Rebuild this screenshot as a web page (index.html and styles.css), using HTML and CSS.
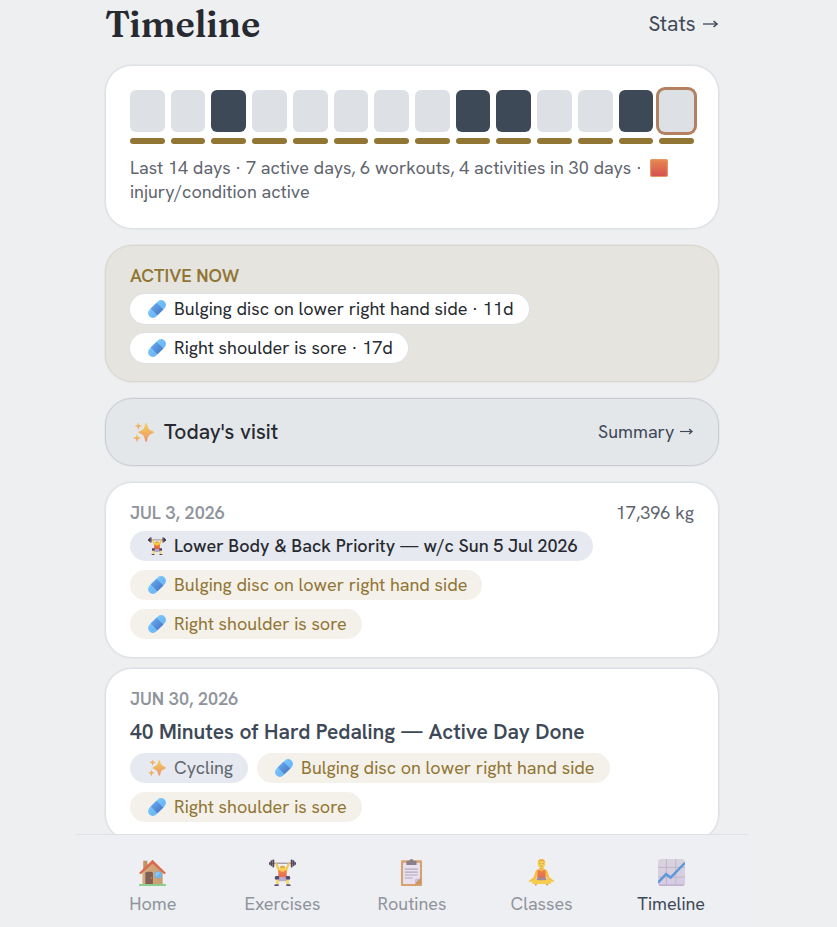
FILE: index.html
```html
<!DOCTYPE html>
<html lang="en">
<head>
<meta charset="utf-8">
<meta name="viewport" content="width=device-width, initial-scale=1">
<title>Timeline</title>
<link rel="stylesheet" href="styles.css">
</head>
<body>
<svg class="sprite" aria-hidden="true">
  <defs>
    <linearGradient id="g-blue" x1="0" y1="0" x2="0" y2="1"><stop offset="0" stop-color="#7cc8fb"/><stop offset="1" stop-color="#6db4f5"/></linearGradient>
    <linearGradient id="g-pad" x1="0" y1="0" x2="0" y2="1"><stop offset="0" stop-color="#5fa3ea"/><stop offset="1" stop-color="#4f7fcb"/></linearGradient>
    <linearGradient id="g-spark" x1="0" y1="0" x2="0" y2="1"><stop offset="0" stop-color="#f3cf57"/><stop offset="1" stop-color="#ee9370"/></linearGradient>
    <linearGradient id="g-red" x1="0" y1="0" x2="0" y2="1"><stop offset="0" stop-color="#e58650"/><stop offset="1" stop-color="#d65350"/></linearGradient>
    <linearGradient id="g-wall" x1="0" y1="0" x2="1" y2="0"><stop offset="0" stop-color="#d3a877"/><stop offset="1" stop-color="#c39462"/></linearGradient>
    <linearGradient id="g-chart" x1="0" y1="0" x2="0" y2="1"><stop offset="0" stop-color="#d6d0dc"/><stop offset="0.9" stop-color="#d5c8e2"/><stop offset="1" stop-color="#b6a3c6"/></linearGradient>
    <linearGradient id="g-shirt" x1="0" y1="0" x2="0" y2="1"><stop offset="0" stop-color="#f27a35"/><stop offset="1" stop-color="#dd5f45"/></linearGradient>
  </defs>
  <symbol id="bandage" viewBox="0 0 32 32">
    <g transform="rotate(-45 16 16)">
      <rect x="-3" y="7.500" width="38" height="17" rx="8.500" fill="url(#g-blue)"/>
      <rect x="8.500" y="7.500" width="15" height="17" fill="url(#g-pad)"/>
      <g fill="#5aa3e8"><circle cx="1" cy="13" r=".8"/><circle cx="5" cy="13" r=".8"/><circle cx="1" cy="18" r=".8"/><circle cx="5" cy="18" r=".8"/><circle cx="27" cy="13" r=".8"/><circle cx="31" cy="13" r=".8"/><circle cx="27" cy="18" r=".8"/><circle cx="31" cy="18" r=".8"/></g>
    </g>
  </symbol>
  <symbol id="sparkles" viewBox="0 0 32 32">
    <g fill="url(#g-spark)">
      <path d="M20 2c1 0 1.300.8 1.600 2 1.400 6 2.800 8 8.800 10 2 .7 2 2.500 0 3.200-6 2-7.400 4-8.800 10.800-.5 2.600-2.700 2.600-3.200 0C17 21.200 15.600 19.200 9.600 17.200c-2-.7-2-2.500 0-3.200 6-2 7.400-4 8.800-10 .3-1.200.6-2 1.600-2z"/>
      <path d="M8 0l1.300 4.200L14 6l-4.700 1.800L8 12 6.700 7.800 2.500 6l4.200-1.800z"/>
      <path d="M6 18l1.500 4.500L12 24.500 7.500 26.300 6 31l-1.500-4.700L0 24.500l4.500-2z"/>
    </g>
  </symbol>
  <symbol id="lifter" viewBox="0 0 32 32">
    <path d="M3 5h26" stroke="#77727e" stroke-width="1.200"/>
    <g fill="#44344f"><rect x="0" y="3.500" width="2" height="3.500" rx="1"/><rect x="1.800" y="1.500" width="2" height="7" rx="1"/><rect x="4" y="0.500" width="2.200" height="9.500" rx="1"/><rect x="30" y="3.500" width="2" height="3.500" rx="1"/><rect x="28.200" y="1.500" width="2" height="7" rx="1"/><rect x="25.800" y="0.500" width="2.200" height="9.500" rx="1"/></g>
    <path d="M8.500 5l3.500 9.500h8L23.500 5" fill="none" stroke="#f4c23c" stroke-width="2.400" stroke-linecap="round" stroke-linejoin="round"/>
    <path d="M11 13.500h10v8.500H11z" fill="url(#g-shirt)"/>
    <circle cx="16" cy="11.500" r="3.500" fill="#fbcb39"/>
    <path d="M12.500 10.500c.5-3.500 6.500-3.500 7 0-2.500.5-4.500-.5-7 0z" fill="#e69b34"/>
    <path d="M11 21.500h10l.5 5h-11z" fill="#b3a5c8"/>
    <rect x="7" y="20" width="5" height="4.500" rx="1.500" fill="#493967"/><rect x="20" y="20" width="5" height="4.500" rx="1.500" fill="#493967"/>
    <path d="M8.500 24.500h3v5.500h-3zM20.500 24.500h3v5.500h-3z" fill="#f6d748"/>
    <path d="M7 30h4.500v2H6zM20.500 30H25l1 2h-5.500z" fill="#55406b"/>
  </symbol>
  <symbol id="house" viewBox="0 0 32 32">
    <rect x="5" y="2" width="5" height="11" fill="#b98a59"/>
    <path d="M4 15L16 4l12 11v15H4z" fill="url(#g-wall)"/>
    <path d="M0 16.500L16 1l16 15.500-2 1.500L16 5.500 2 18z" fill="#db5c3c"/>
    <path d="M7.500 30V17q0-2 2-2h5q2 0 2 2v13z" fill="#765047"/><circle cx="14.500" cy="22.500" r=".8" fill="#c89c6a"/>
    <rect x="19" y="15" width="7.500" height="7.500" fill="#5fb0f5"/><path d="M20 16h5.500L20 21.500z" fill="#82c5fa"/>
    <rect x="0" y="29.500" width="32" height="2.500" rx="1" fill="#80ca82"/>
  </symbol>
  <symbol id="clipboard" viewBox="0 0 32 32">
    <rect x="3.500" y="1.500" width="25" height="30.500" rx="1.500" fill="#d59a60"/>
    <path d="M6 4.500h20V23l-6 6.500H6z" fill="#e8e0f0"/>
    <path d="M26 23l-6 6.500V25q0-2 2-2z" fill="#c9b9d6"/><path d="M27 22v8h-7z" fill="#c98a55"/>
    <path d="M10 7V3.500Q10 2 12 2h1.500Q14 0 16 0t2.500 2H20q2 0 2 1.500V7z" fill="#81747f"/>
    <path d="M8 12h15.500M8 15.500h15.500M8 19h15.500M8 22.500h9.500" stroke="#aaa0b5" stroke-width="1.400"/>
  </symbol>
  <symbol id="yoga" viewBox="0 0 32 32">
    <path d="M13.500 8h5v5h-5z" fill="#eca831"/>
    <path d="M12.500 12.500c-3 0-4 2-4.500 5l-1.500 4.500-5 3.500c-1 .8 0 2 1 1.500l6.500-2.500 3-6h8l3 6 6.500 2.500c1 .5 2-.7 1-1.500l-5-3.500-1.500-4.500c-.5-3-1.500-5-4.500-5z" fill="#f4be33"/>
    <path d="M4.500 26c3-1.500 7-2.500 11.500-2.500s8.500 1 11.500 2.500c1.500 1.800-.5 3.500-3 3.500h-17c-2.500 0-4.500-1.700-3-3.500z" fill="#f9ca3d"/>
    <path d="M11.500 12l2 1c1.500 1.500 3.500 1.500 5 0l2-1 .5 10.500H11z" fill="url(#g-shirt)"/>
    <path d="M11 22h10l1 2.500c-4 .8-8 .8-12 0z" fill="#998095"/>
    <path d="M8 29.500l3 .5-2 2zM24 29.500l-3 .5 2 2z" fill="#d98634"/>
    <ellipse cx="16" cy="5.500" rx="4.500" ry="5.500" fill="#fbcf42"/>
    <path d="M13.500 5.500h1.500M17 5.500h1.500M15 8.500h2" stroke="#a66a2b" stroke-width=".9"/>
    <path d="M11.600 4.500C12 1 14 0 16 0s4 1 4.400 4.500C18 2 14 2 11.600 4.500z" fill="#edab33"/>
  </symbol>
  <symbol id="chart" viewBox="0 0 32 32">
    <rect width="32" height="32" rx="4" fill="url(#g-chart)"/>
    <path d="M10 0v32M21 0v32M0 10h32M0 21.500h32" stroke="#b8adbf" stroke-width="1"/>
    <path d="M0 28l9.500-10 5.500 4L32 4.500" fill="none" stroke="#4d90d8" stroke-width="3"/>
  </symbol>
  <symbol id="square" viewBox="0 0 32 32"><rect width="32" height="32" rx="3" fill="#e99563"/><rect x="2" y="2" width="28" height="28" rx="2" fill="url(#g-red)"/></symbol>
  <symbol id="arrow" viewBox="0 0 15 10">
    <path d="M0 5h13" fill="none" stroke="currentColor" stroke-width="1.300"/>
    <path d="M10.500 2L14 5l-3.500 3" fill="none" stroke="currentColor" stroke-width="1.500"/>
  </symbol>
</svg>

<main class="page">
  <header class="header">
    <h1>Timeline</h1>
    <a class="stats" href="#stats">Stats <svg class="arrow" aria-hidden="true"><use href="#arrow"/></svg></a>
  </header>

  <div class="overview">
    <section class="card roomy">
      <ul class="days" aria-label="Last 14 days">
        <li></li><li></li><li class="on"></li><li></li><li></li><li></li><li></li><li></li><li class="on"></li><li class="on"></li><li></li><li></li><li class="on"></li><li class="today"></li>
      </ul>
      <p class="note">Last 14 days · 7 active days, 6 workouts, 4 activities in 30 days · <svg class="icon inline" aria-hidden="true"><use href="#square"/></svg> injury/condition active</p>
    </section>

    <section class="card active">
      <h2 class="label gold">ACTIVE NOW</h2>
      <ul class="chips">
        <li class="chip white"><svg class="icon" aria-hidden="true"><use href="#bandage"/></svg>Bulging disc on lower right hand side · 11d</li>
        <li class="chip white"><svg class="icon" aria-hidden="true"><use href="#bandage"/></svg>Right shoulder is sore · 17d</li>
      </ul>
    </section>

    <a class="card visit" href="#summary">
      <span class="visit-title"><svg class="icon visit-icon" aria-hidden="true"><use href="#sparkles"/></svg>Today's visit</span>
      <span class="summary">Summary <svg class="arrow small" aria-hidden="true"><use href="#arrow"/></svg></span>
    </a>
  </div>

  <div class="entries">
    <article class="card">
      <div class="row"><h2 class="label">JUL 3, 2026</h2><span class="weight">17,396 kg</span></div>
      <ul class="chips">
        <li class="chip slate strong"><svg class="icon" aria-hidden="true"><use href="#lifter"/></svg>Lower Body &amp; Back Priority — w/c Sun 5 Jul 2026</li>
        <li class="chip sand"><svg class="icon" aria-hidden="true"><use href="#bandage"/></svg>Bulging disc on lower right hand side</li>
        <li class="chip sand"><svg class="icon" aria-hidden="true"><use href="#bandage"/></svg>Right shoulder is sore</li>
      </ul>
    </article>
    <article class="card">
      <h2 class="label">JUN 30, 2026</h2>
      <h3 class="title">40 Minutes of Hard Pedaling — Active Day Done</h3>
      <ul class="chips">
        <li class="chip slate"><svg class="icon" aria-hidden="true"><use href="#sparkles"/></svg>Cycling</li>
        <li class="chip sand"><svg class="icon" aria-hidden="true"><use href="#bandage"/></svg>Bulging disc on lower right hand side</li>
        <li class="chip sand"><svg class="icon" aria-hidden="true"><use href="#bandage"/></svg>Right shoulder is sore</li>
      </ul>
    </article>
  </div>
</main>

<nav class="tabs" aria-label="Main">
  <a href="#home"><svg class="tab-icon" aria-hidden="true"><use href="#house"/></svg>Home</a>
  <a href="#exercises"><svg class="tab-icon" aria-hidden="true"><use href="#lifter"/></svg>Exercises</a>
  <a href="#routines"><svg class="tab-icon" aria-hidden="true"><use href="#clipboard"/></svg>Routines</a>
  <a href="#classes"><svg class="tab-icon" aria-hidden="true"><use href="#yoga"/></svg>Classes</a>
  <a class="current" href="#timeline" aria-current="page"><svg class="tab-icon" aria-hidden="true"><use href="#chart"/></svg>Timeline</a>
</nav>
</body>
</html>
```
FILE: styles.css
```css
:root {
  --ink: #272a30;
  --slate: #3e4957;
  --grey: #5f656e;
  --muted: #8f949c;
  --gold: #917534;
  --line: #dde0e5;
}

* { box-sizing: border-box; }

body {
  margin: 0;
  padding-right: 13px;
  background: #eeeff1;
  color: var(--ink);
  font: 18px/24px "Hanken Grotesk", Roboto, "Liberation Sans", sans-serif;
}

h1, h2, h3, p, ul { margin: 0; padding: 0; }
ul { list-style: none; }
a { color: inherit; text-decoration: none; }

.sprite { position: absolute; width: 0; height: 0; }

.page {
  max-width: 672px;
  margin: 0 auto;
  padding: 0 29px 80px;
}

.header {
  display: flex;
  align-items: center;
  justify-content: space-between;
  min-height: 48px;
  margin-bottom: 17px;
}

h1 {
  font: 600 36px/48px Fraunces, "Liberation Serif", serif;
}

.stats {
  color: var(--slate);
  font-size: 21px;
}

.arrow {
  width: 15px;
  height: 10px;
  margin: 0 1px 0 2px;
  vertical-align: 2px;
}

.small { width: 13px; height: 9px; margin: 0 1px; }

.overview { display: grid; gap: 16px; margin-bottom: 16px; }
.entries { display: grid; gap: 10px; }

.card {
  padding: 18px 24px;
  background: #fff;
  border: 1px solid var(--line);
  border-radius: 27px;
  box-shadow: 0 0 0 1px #dde0e580;
}

.roomy { padding: 24px; }

.days {
  display: grid;
  grid-template-columns: repeat(14, 1fr);
  gap: 6px;
  margin-bottom: 12px;
}

.days li::before,
.days li::after {
  content: "";
  display: block;
}

.days li::before {
  height: 42px;
  margin-bottom: 6px;
  background: var(--line);
  border-radius: 6px;
}

.days li::after {
  height: 6px;
  background: var(--gold);
  border-radius: 3px;
}

.days .on::before { background: var(--slate); }
.days .today::before { box-shadow: 0 0 0 3px #b38060; }

.note { color: var(--grey); }

.icon {
  flex: none;
  width: 18px;
  height: 18px;
}

.inline { margin-left: 3px; vertical-align: -3px; }

.active { background: #e5e4df; border-color: #dad6c9; }

.label {
  color: var(--muted);
  font-size: 18px;
  font-weight: 600;
  line-height: 24px;
}

.gold { color: var(--gold); }

.chips {
  display: flex;
  flex-wrap: wrap;
  gap: 9px;
  margin-top: 6px;
}

.chip {
  display: flex;
  align-items: center;
  gap: 8px;
  min-height: 30px;
  padding: 0 15px 0 18px;
  border-radius: 15px;
}

.white { background: #fff; box-shadow: 0 0 0 1px var(--line); }
.slate { background: #e6e9ef; color: var(--grey); }
.sand { background: #f4f1ea; color: var(--gold); }
.strong { color: var(--ink); font-weight: 500; }

.visit {
  display: flex;
  align-items: center;
  justify-content: space-between;
  min-height: 68px;
  background: #e4e7ea;
  border-color: #c9cdd2;
}

.visit-title {
  display: flex;
  align-items: center;
  gap: 10px;
  padding-left: 3px;
  font-size: 21px;
  font-weight: 500;
}

.visit-icon { width: 21px; height: 21px; }
.summary { color: var(--slate); }
.row { display: flex; justify-content: space-between; }
.weight { color: var(--grey); }

.title {
  color: var(--slate);
  font-size: 21px;
  font-weight: 600;
  line-height: 30px;
  margin-top: 6px;
}

.tabs {
  position: fixed;
  right: 13px;
  bottom: 0;
  left: 0;
  display: grid;
  grid-template-columns: repeat(5, 1fr);
  max-width: 672px;
  min-height: 93px;
  margin: 0 auto;
  padding: 24px 12px 10px;
  background: #eeeff2;
  border-top: 1px solid var(--line);
}

.tabs a {
  display: flex;
  flex-direction: column;
  align-items: center;
  gap: 6px;
  color: var(--muted);
}

.tabs .current { color: var(--slate); }
.tab-icon { width: 27px; height: 27px; opacity: 0.9; }
```
